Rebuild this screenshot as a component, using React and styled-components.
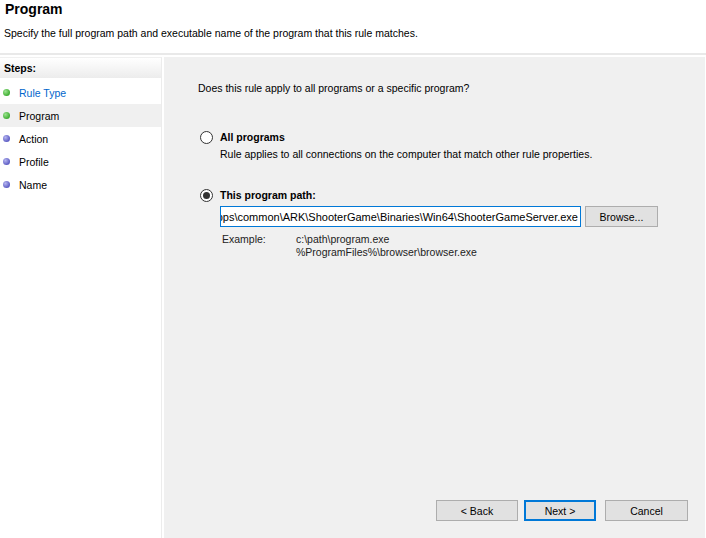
import React from "react";
import styled, { createGlobalStyle } from "styled-components";

const Global = createGlobalStyle`
  html, body {
    margin: 0;
    padding: 0;
    background: #ffffff;
  }
  body {
    font-family: "Liberation Sans", Arial, sans-serif;
    font-size: 10.5px;
    color: #000;
  }
`;

const steps = [
  { name: "Rule Type", done: true, link: true },
  { name: "Program", done: true, current: true },
  { name: "Action" },
  { name: "Profile" },
  { name: "Name" },
];

const App = () => {
  return (
    <>
      <Global />
      <Window>
        <Header>
          <Title>Program</Title>
          <Subtitle>
            Specify the full program path and executable name of the program that this rule matches.
          </Subtitle>
        </Header>
        <Body>
          <Sidebar>
            <StepsHead>Steps:</StepsHead>
            {steps.map((s) => (
              <Step key={s.name} $current={s.current} $link={s.link}>
                <Dot $done={s.done} />
                {s.name}
              </Step>
            ))}
          </Sidebar>
          <Content>
            <Form>
              <Question>Does this rule apply to all programs or a specific program?</Question>
              <Option>
                <Radio />
                <OptionText>
                  <OptionLabel>All programs</OptionLabel>
                  <OptionHint>Rule applies to all connections on the computer that match other rule properties.</OptionHint>
                </OptionText>
              </Option>
              <Option $gap>
                <Radio $checked />
                <OptionText>
                  <OptionLabel>This program path:</OptionLabel>
                  <PathRow>
                    <PathBox>
                      <span>C:\Program Files (x86)\Steam\steamapps\common\ARK\ShooterGame\Binaries\Win64\ShooterGameServer.exe</span>
                    </PathBox>
                    <Button $w={73}>Browse...</Button>
                  </PathRow>
                  <Example>
                    <span>Example:</span>
                    <div>
                      c:\path\program.exe
                      <br />
                      %ProgramFiles%\browser\browser.exe
                    </div>
                  </Example>
                </OptionText>
              </Option>
            </Form>
            <Footer>
              <Button $w={82}>&lt; Back</Button>
              <Button $w={72} $primary>Next &gt;</Button>
              <Button $w={83} $left={3}>Cancel</Button>
            </Footer>
          </Content>
        </Body>
      </Window>
    </>
  );
};

const Window = styled.div`
  width: 706px;
  height: 538px;
  display: flex;
  flex-direction: column;
  overflow: hidden;
  background: #fff;
`;

const Header = styled.div`
  height: 55px;
  padding: 0 0 0 4px;
  box-sizing: border-box;
  border-bottom: 2px solid #e9e9e9;
`;

const Title = styled.div`
  font-weight: bold;
  font-size: 14px;
  padding: 1px 0 0 1px;
  line-height: 16px;
`;

const Subtitle = styled.div`
  margin-top: 10px;
  line-height: 13px;
`;

const Body = styled.div`
  flex: 1;
  display: flex;
  padding-top: 2px;
  gap: 2px;
`;

const Sidebar = styled.div`
  width: 161px;
  border-right: 1px solid #ececec;
  border-top: 1px solid #f0f0f0;
  background: #fff;
`;

const StepsHead = styled.div`
  height: 20px;
  line-height: 20px;
  padding-left: 4px;
  font-weight: bold;
  background: linear-gradient(#ffffff, #ececec);
  margin-bottom: 3px;
`;

const Step = styled.div`
  height: 23px;
  display: flex;
  align-items: center;
  padding-left: 3px;
  gap: 9px;
  color: ${(p) => (p.$link ? "#0066cc" : "#000")};
  background: ${(p) => (p.$current ? "#f0f0f0" : "transparent")};
`;

const Dot = styled.span`
  width: 7px;
  height: 7px;
  border-radius: 50%;
  background: ${(p) =>
    p.$done
      ? "radial-gradient(circle at 35% 35%, #9be38f, #3fae32 70%)"
      : "radial-gradient(circle at 35% 35%, #b5b5f0, #5d5dc4 70%)"};
`;

const Content = styled.div`
  flex: 1;
  background: #f0f0f0;
  display: flex;
  flex-direction: column;
  margin-right: 1px;
`;

const Form = styled.div`
  flex: 1;
  padding: 25px 0 0 34px;
`;

const Question = styled.div`
  line-height: 13px;
  margin-bottom: 36px;
`;

const Option = styled.div`
  display: flex;
  gap: 7px;
  margin-left: 2px;
  margin-top: ${(p) => (p.$gap ? "28px" : "0")};
`;

const Radio = styled.span`
  flex: none;
  width: 11px;
  height: 11px;
  border: 1px solid #333;
  border-radius: 50%;
  background: #fff;
  position: relative;

  &::after {
    content: "";
    display: ${(p) => (p.$checked ? "block" : "none")};
    position: absolute;
    left: 2px;
    top: 2px;
    width: 7px;
    height: 7px;
    border-radius: 50%;
    background: #333;
  }
`;

const OptionText = styled.div`
  display: flex;
  flex-direction: column;
`;

const OptionLabel = styled.div`
  font-weight: bold;
  line-height: 13px;
`;

const OptionHint = styled.div`
  margin-top: 4px;
  line-height: 13px;
`;

const PathRow = styled.div`
  display: flex;
  gap: 4px;
  margin-top: 4px;
`;

const PathBox = styled.div`
  width: 361px;
  height: 21px;
  box-sizing: border-box;
  border: 1px solid #0078d7;
  background: #fff;
  display: flex;
  align-items: center;
  justify-content: flex-end;
  overflow: hidden;
  white-space: nowrap;
  padding-right: 2px;
  font-size: 11px;

  span {
    flex: none;
  }
`;

const Button = styled.button`
  width: ${(p) => p.$w}px;
  height: 21px;
  margin-left: ${(p) => (p.$left ? p.$left + "px" : "0")};
  box-sizing: border-box;
  font-family: inherit;
  font-size: 10.5px;
  color: #000;
  background: #e1e1e1;
  border: ${(p) => (p.$primary ? "2px solid #0078d7" : "1px solid #adadad")};
  padding: 0;
`;

const Example = styled.div`
  display: grid;
  grid-template-columns: 74px auto;
  margin: 6px 0 0 2px;
  line-height: 13px;
  color: #222;
`;

const Footer = styled.div`
  display: flex;
  justify-content: flex-end;
  gap: 6px;
  padding: 0 17px 17px 0;
`;

export default App;
